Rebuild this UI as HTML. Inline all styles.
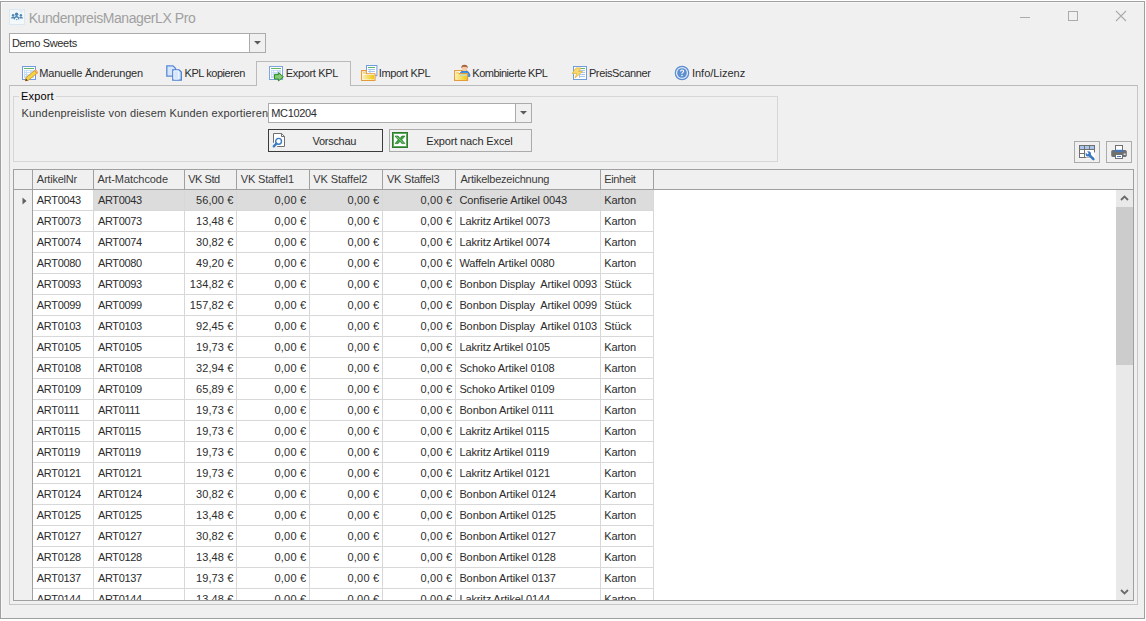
<!DOCTYPE html>
<html><head><meta charset="utf-8">
<style>
*{margin:0;padding:0;box-sizing:border-box}
html,body{width:1146px;height:621px;overflow:hidden;background:#fff}
body{position:relative;font-family:"Liberation Sans",sans-serif;font-size:11px;color:#2c2c2c;letter-spacing:-0.4px}
.a{position:absolute}
#win{position:absolute;left:0;top:1px;width:1145px;height:618px;border:1px solid #a0a0a0;background:#f0f0f0;box-shadow:inset 1px 1px 0 #f8f8f8}
.t{position:absolute;white-space:pre;line-height:20px;height:20px}
/* grid */
.hc{position:absolute;top:170px;height:19px;line-height:19px;padding-left:4px;color:#3a3a3a;white-space:pre;background:#f0f0f0}
.hl{position:absolute;top:170px;width:1px;height:19px;background:#a0a0a0}
.c{position:absolute;height:20px;line-height:20px;padding:0 3px 0 4px;white-space:pre;overflow:hidden;background:#fff}
.c.r{text-align:right}
.c.sel{background:#dcdcdc}
.rl{position:absolute;left:33px;width:621px;height:1px;background:#d8d8d8}
.vl{position:absolute;top:190px;width:1px;height:410px;background:#d8d8d8}
</style></head><body>
<div id="win"></div>

<!-- title bar -->


<!-- window buttons -->
<div class="a" style="left:1020px;top:17px;width:10px;height:1px;background:#ababab"></div>
<div class="a" style="left:1068px;top:11px;width:10px;height:10px;border:1px solid #ababab"></div>
<svg class="a" style="left:1115px;top:10px" width="12" height="12" viewBox="0 0 12 12"><path d="M1 1L11 11M11 1L1 11" stroke="#ababab" stroke-width="1.1" fill="none"/></svg>

<!-- customer combo -->
<div class="a" style="left:9px;top:33px;width:257px;height:20px;border:1px solid #ababab;background:#fff"></div>
<div class="a" style="left:249px;top:34px;width:16px;height:18px;border-left:1px solid #ababab;background:#f0f0f0"></div>
<svg class="a" style="left:253px;top:40px" width="9" height="6" viewBox="0 0 9 6"><path d="M1 1H8L4.5 4.5Z" fill="#5a5a5a"/></svg>

<!-- tab page -->
<div class="a" style="left:9px;top:85px;width:1129px;height:520px;border:1px solid #c6c6c6;border-top-color:#bababa"></div>
<!-- active tab -->
<div class="a" style="left:256px;top:61px;width:95px;height:25px;border:1px solid #bababa;border-bottom:none;background:#f0f0f0"></div>

<!-- tabs text -->

<!-- group box -->
<div class="a" style="left:13px;top:96px;width:765px;height:66px;border:1px solid #d6d6d6"></div>

<!-- MC combo -->
<div class="a" style="left:268px;top:103px;width:264px;height:20px;border:1px solid #ababab;background:#fff"></div>
<div class="a" style="left:515px;top:104px;width:16px;height:18px;border-left:1px solid #ababab;background:#f0f0f0"></div>
<svg class="a" style="left:519px;top:110px" width="9" height="6" viewBox="0 0 9 6"><path d="M1 1H8L4.5 4.5Z" fill="#5a5a5a"/></svg>

<!-- buttons -->
<div class="a" style="left:268px;top:129px;width:115px;height:23px;border:1px solid #3c3c3c;background:#f0f0f0"></div>
<div class="a" style="left:389px;top:129px;width:143px;height:23px;border:1px solid #ababab;background:#f0f0f0"></div>

<!-- right buttons -->
<div class="a" style="left:1074px;top:141px;width:26px;height:22px;border:1px solid #ababab"></div>
<div class="a" style="left:1106px;top:141px;width:26px;height:22px;border:1px solid #ababab"></div>

<!-- grid -->
<div class="a" style="left:13px;top:169px;width:1121px;height:432px;border:1px solid #a0a0a0;background:#fff"></div>
<div class="a" style="left:14px;top:170px;width:1119px;height:19px;background:#f0f0f0"></div>
<div class="a" style="left:14px;top:189px;width:1119px;height:1px;background:#a0a0a0"></div>
<div class="a" style="left:14px;top:190px;width:18px;height:410px;background:#f0f0f0"></div>
<div class="a" style="left:32px;top:190px;width:1px;height:410px;background:#a0a0a0"></div>
<div class="a" style="left:14px;top:170px;width:1119px;height:430px;overflow:hidden;">
<div class="a" style="left:-14px;top:-170px;width:1146px;height:621px">
<div class="hc" id="h0" style="left:33px;width:60px;padding-left:3.80px;letter-spacing:-0.225px"><span>ArtikelNr</span></div>
<div class="hc" id="h1" style="left:94px;width:90px;padding-left:3.40px;letter-spacing:-0.074px"><span>Art-Matchcode</span></div>
<div class="hc" id="h2" style="left:185px;width:51px;padding-left:3.20px;letter-spacing:-0.450px"><span>VK Std</span></div>
<div class="hc" id="h3" style="left:237px;width:72px;padding-left:3.80px;letter-spacing:-0.162px"><span>VK Staffel1</span></div>
<div class="hc" id="h4" style="left:310px;width:72px;padding-left:3.20px;letter-spacing:-0.054px"><span>VK Staffel2</span></div>
<div class="hc" id="h5" style="left:383px;width:72px;padding-left:4.00px;letter-spacing:-0.234px"><span>VK Staffel3</span></div>
<div class="hc" id="h6" style="left:456px;width:144px;padding-left:4.40px;letter-spacing:-0.232px"><span>Artikelbezeichnung</span></div>
<div class="hc" id="h7" style="left:601px;width:52px;padding-left:3.20px;letter-spacing:-0.330px"><span>Einheit</span></div>
<div class="hl" style="left:32px"></div>
<div class="hl" style="left:93px"></div>
<div class="hl" style="left:184px"></div>
<div class="hl" style="left:236px"></div>
<div class="hl" style="left:309px"></div>
<div class="hl" style="left:382px"></div>
<div class="hl" style="left:455px"></div>
<div class="hl" style="left:600px"></div>
<div class="hl" style="left:653px"></div>
<div class="c" id="r0c0" style="left:33px;top:190px;width:60px;padding:0 0 0 3.80px;letter-spacing:-0.310px"><span>ART0043</span></div>
<div class="c sel" id="r0c1" style="left:94px;top:190px;width:90px;padding:0 0 0 4.00px;letter-spacing:-0.370px"><span>ART0043</span></div>
<div class="c sel r" id="r0c2" style="left:185px;top:190px;width:51px;padding:0 2.60px 0 0;letter-spacing:0.110px"><span>56,00 €</span></div>
<div class="c sel r" id="r0c3" style="left:237px;top:190px;width:72px;padding:0 2.70px 0 0;letter-spacing:0.200px"><span>0,00 €</span></div>
<div class="c sel r" id="r0c4" style="left:310px;top:190px;width:72px;padding:0 2.70px 0 0;letter-spacing:0.200px"><span>0,00 €</span></div>
<div class="c sel r" id="r0c5" style="left:383px;top:190px;width:72px;padding:0 2.70px 0 0;letter-spacing:0.200px"><span>0,00 €</span></div>
<div class="c sel" id="r0c6" style="left:456px;top:190px;width:144px;padding:0 0 0 3.40px;letter-spacing:-0.110px"><span>Confiserie Artikel 0043</span></div>
<div class="c sel" id="r0c7" style="left:601px;top:190px;width:52px;padding:0 0 0 3.20px;letter-spacing:-0.076px"><span>Karton</span></div>
<div class="rl" style="top:210px"></div>
<div class="c" style="left:33px;top:211px;width:60px;padding:0 0 0 3.80px;letter-spacing:-0.310px"><span>ART0073</span></div>
<div class="c" style="left:94px;top:211px;width:90px;padding:0 0 0 4.00px;letter-spacing:-0.370px"><span>ART0073</span></div>
<div class="c r" style="left:185px;top:211px;width:51px;padding:0 2.60px 0 0;letter-spacing:0.110px"><span>13,48 €</span></div>
<div class="c r" style="left:237px;top:211px;width:72px;padding:0 2.70px 0 0;letter-spacing:0.200px"><span>0,00 €</span></div>
<div class="c r" style="left:310px;top:211px;width:72px;padding:0 2.70px 0 0;letter-spacing:0.200px"><span>0,00 €</span></div>
<div class="c r" style="left:383px;top:211px;width:72px;padding:0 2.70px 0 0;letter-spacing:0.200px"><span>0,00 €</span></div>
<div class="c" style="left:456px;top:211px;width:144px;padding:0 0 0 3.40px;letter-spacing:-0.110px"><span>Lakritz Artikel 0073</span></div>
<div class="c" style="left:601px;top:211px;width:52px;padding:0 0 0 3.20px;letter-spacing:-0.076px"><span>Karton</span></div>
<div class="rl" style="top:231px"></div>
<div class="c" style="left:33px;top:232px;width:60px;padding:0 0 0 3.80px;letter-spacing:-0.310px"><span>ART0074</span></div>
<div class="c" style="left:94px;top:232px;width:90px;padding:0 0 0 4.00px;letter-spacing:-0.370px"><span>ART0074</span></div>
<div class="c r" style="left:185px;top:232px;width:51px;padding:0 2.60px 0 0;letter-spacing:0.110px"><span>30,82 €</span></div>
<div class="c r" style="left:237px;top:232px;width:72px;padding:0 2.70px 0 0;letter-spacing:0.200px"><span>0,00 €</span></div>
<div class="c r" style="left:310px;top:232px;width:72px;padding:0 2.70px 0 0;letter-spacing:0.200px"><span>0,00 €</span></div>
<div class="c r" style="left:383px;top:232px;width:72px;padding:0 2.70px 0 0;letter-spacing:0.200px"><span>0,00 €</span></div>
<div class="c" style="left:456px;top:232px;width:144px;padding:0 0 0 3.40px;letter-spacing:-0.110px"><span>Lakritz Artikel 0074</span></div>
<div class="c" style="left:601px;top:232px;width:52px;padding:0 0 0 3.20px;letter-spacing:-0.076px"><span>Karton</span></div>
<div class="rl" style="top:252px"></div>
<div class="c" style="left:33px;top:253px;width:60px;padding:0 0 0 3.80px;letter-spacing:-0.310px"><span>ART0080</span></div>
<div class="c" style="left:94px;top:253px;width:90px;padding:0 0 0 4.00px;letter-spacing:-0.370px"><span>ART0080</span></div>
<div class="c r" style="left:185px;top:253px;width:51px;padding:0 2.60px 0 0;letter-spacing:0.110px"><span>49,20 €</span></div>
<div class="c r" style="left:237px;top:253px;width:72px;padding:0 2.70px 0 0;letter-spacing:0.200px"><span>0,00 €</span></div>
<div class="c r" style="left:310px;top:253px;width:72px;padding:0 2.70px 0 0;letter-spacing:0.200px"><span>0,00 €</span></div>
<div class="c r" style="left:383px;top:253px;width:72px;padding:0 2.70px 0 0;letter-spacing:0.200px"><span>0,00 €</span></div>
<div class="c" style="left:456px;top:253px;width:144px;padding:0 0 0 3.40px;letter-spacing:-0.110px"><span>Waffeln Artikel 0080</span></div>
<div class="c" style="left:601px;top:253px;width:52px;padding:0 0 0 3.20px;letter-spacing:-0.076px"><span>Karton</span></div>
<div class="rl" style="top:273px"></div>
<div class="c" id="r4c0" style="left:33px;top:274px;width:60px;padding:0 0 0 3.80px;letter-spacing:-0.310px"><span>ART0093</span></div>
<div class="c" id="r4c1" style="left:94px;top:274px;width:90px;padding:0 0 0 4.00px;letter-spacing:-0.370px"><span>ART0093</span></div>
<div class="c r" id="r4c2" style="left:185px;top:274px;width:51px;padding:0 2.60px 0 0;letter-spacing:0.110px"><span>134,82 €</span></div>
<div class="c r" id="r4c3" style="left:237px;top:274px;width:72px;padding:0 2.70px 0 0;letter-spacing:0.200px"><span>0,00 €</span></div>
<div class="c r" id="r4c4" style="left:310px;top:274px;width:72px;padding:0 2.70px 0 0;letter-spacing:0.200px"><span>0,00 €</span></div>
<div class="c r" id="r4c5" style="left:383px;top:274px;width:72px;padding:0 2.70px 0 0;letter-spacing:0.200px"><span>0,00 €</span></div>
<div class="c" id="r4c6" style="left:456px;top:274px;width:144px;padding:0 0 0 3.40px;letter-spacing:-0.110px"><span>Bonbon Display&nbsp; Artikel 0093</span></div>
<div class="c" id="r4c7" style="left:601px;top:274px;width:52px;padding:0 0 0 3.20px;letter-spacing:-0.076px"><span>Stück</span></div>
<div class="rl" style="top:294px"></div>
<div class="c" style="left:33px;top:295px;width:60px;padding:0 0 0 3.80px;letter-spacing:-0.310px"><span>ART0099</span></div>
<div class="c" style="left:94px;top:295px;width:90px;padding:0 0 0 4.00px;letter-spacing:-0.370px"><span>ART0099</span></div>
<div class="c r" style="left:185px;top:295px;width:51px;padding:0 2.60px 0 0;letter-spacing:0.110px"><span>157,82 €</span></div>
<div class="c r" style="left:237px;top:295px;width:72px;padding:0 2.70px 0 0;letter-spacing:0.200px"><span>0,00 €</span></div>
<div class="c r" style="left:310px;top:295px;width:72px;padding:0 2.70px 0 0;letter-spacing:0.200px"><span>0,00 €</span></div>
<div class="c r" style="left:383px;top:295px;width:72px;padding:0 2.70px 0 0;letter-spacing:0.200px"><span>0,00 €</span></div>
<div class="c" style="left:456px;top:295px;width:144px;padding:0 0 0 3.40px;letter-spacing:-0.110px"><span>Bonbon Display&nbsp; Artikel 0099</span></div>
<div class="c" style="left:601px;top:295px;width:52px;padding:0 0 0 3.20px;letter-spacing:-0.076px"><span>Stück</span></div>
<div class="rl" style="top:315px"></div>
<div class="c" style="left:33px;top:316px;width:60px;padding:0 0 0 3.80px;letter-spacing:-0.310px"><span>ART0103</span></div>
<div class="c" style="left:94px;top:316px;width:90px;padding:0 0 0 4.00px;letter-spacing:-0.370px"><span>ART0103</span></div>
<div class="c r" style="left:185px;top:316px;width:51px;padding:0 2.60px 0 0;letter-spacing:0.110px"><span>92,45 €</span></div>
<div class="c r" style="left:237px;top:316px;width:72px;padding:0 2.70px 0 0;letter-spacing:0.200px"><span>0,00 €</span></div>
<div class="c r" style="left:310px;top:316px;width:72px;padding:0 2.70px 0 0;letter-spacing:0.200px"><span>0,00 €</span></div>
<div class="c r" style="left:383px;top:316px;width:72px;padding:0 2.70px 0 0;letter-spacing:0.200px"><span>0,00 €</span></div>
<div class="c" style="left:456px;top:316px;width:144px;padding:0 0 0 3.40px;letter-spacing:-0.110px"><span>Bonbon Display&nbsp; Artikel 0103</span></div>
<div class="c" style="left:601px;top:316px;width:52px;padding:0 0 0 3.20px;letter-spacing:-0.076px"><span>Stück</span></div>
<div class="rl" style="top:336px"></div>
<div class="c" style="left:33px;top:337px;width:60px;padding:0 0 0 3.80px;letter-spacing:-0.310px"><span>ART0105</span></div>
<div class="c" style="left:94px;top:337px;width:90px;padding:0 0 0 4.00px;letter-spacing:-0.370px"><span>ART0105</span></div>
<div class="c r" style="left:185px;top:337px;width:51px;padding:0 2.60px 0 0;letter-spacing:0.110px"><span>19,73 €</span></div>
<div class="c r" style="left:237px;top:337px;width:72px;padding:0 2.70px 0 0;letter-spacing:0.200px"><span>0,00 €</span></div>
<div class="c r" style="left:310px;top:337px;width:72px;padding:0 2.70px 0 0;letter-spacing:0.200px"><span>0,00 €</span></div>
<div class="c r" style="left:383px;top:337px;width:72px;padding:0 2.70px 0 0;letter-spacing:0.200px"><span>0,00 €</span></div>
<div class="c" style="left:456px;top:337px;width:144px;padding:0 0 0 3.40px;letter-spacing:-0.110px"><span>Lakritz Artikel 0105</span></div>
<div class="c" style="left:601px;top:337px;width:52px;padding:0 0 0 3.20px;letter-spacing:-0.076px"><span>Karton</span></div>
<div class="rl" style="top:357px"></div>
<div class="c" style="left:33px;top:358px;width:60px;padding:0 0 0 3.80px;letter-spacing:-0.310px"><span>ART0108</span></div>
<div class="c" style="left:94px;top:358px;width:90px;padding:0 0 0 4.00px;letter-spacing:-0.370px"><span>ART0108</span></div>
<div class="c r" style="left:185px;top:358px;width:51px;padding:0 2.60px 0 0;letter-spacing:0.110px"><span>32,94 €</span></div>
<div class="c r" style="left:237px;top:358px;width:72px;padding:0 2.70px 0 0;letter-spacing:0.200px"><span>0,00 €</span></div>
<div class="c r" style="left:310px;top:358px;width:72px;padding:0 2.70px 0 0;letter-spacing:0.200px"><span>0,00 €</span></div>
<div class="c r" style="left:383px;top:358px;width:72px;padding:0 2.70px 0 0;letter-spacing:0.200px"><span>0,00 €</span></div>
<div class="c" style="left:456px;top:358px;width:144px;padding:0 0 0 3.40px;letter-spacing:-0.110px"><span>Schoko Artikel 0108</span></div>
<div class="c" style="left:601px;top:358px;width:52px;padding:0 0 0 3.20px;letter-spacing:-0.076px"><span>Karton</span></div>
<div class="rl" style="top:378px"></div>
<div class="c" style="left:33px;top:379px;width:60px;padding:0 0 0 3.80px;letter-spacing:-0.310px"><span>ART0109</span></div>
<div class="c" style="left:94px;top:379px;width:90px;padding:0 0 0 4.00px;letter-spacing:-0.370px"><span>ART0109</span></div>
<div class="c r" style="left:185px;top:379px;width:51px;padding:0 2.60px 0 0;letter-spacing:0.110px"><span>65,89 €</span></div>
<div class="c r" style="left:237px;top:379px;width:72px;padding:0 2.70px 0 0;letter-spacing:0.200px"><span>0,00 €</span></div>
<div class="c r" style="left:310px;top:379px;width:72px;padding:0 2.70px 0 0;letter-spacing:0.200px"><span>0,00 €</span></div>
<div class="c r" style="left:383px;top:379px;width:72px;padding:0 2.70px 0 0;letter-spacing:0.200px"><span>0,00 €</span></div>
<div class="c" style="left:456px;top:379px;width:144px;padding:0 0 0 3.40px;letter-spacing:-0.110px"><span>Schoko Artikel 0109</span></div>
<div class="c" style="left:601px;top:379px;width:52px;padding:0 0 0 3.20px;letter-spacing:-0.076px"><span>Karton</span></div>
<div class="rl" style="top:399px"></div>
<div class="c" style="left:33px;top:400px;width:60px;padding:0 0 0 3.80px;letter-spacing:-0.310px"><span>ART0111</span></div>
<div class="c" style="left:94px;top:400px;width:90px;padding:0 0 0 4.00px;letter-spacing:-0.370px"><span>ART0111</span></div>
<div class="c r" style="left:185px;top:400px;width:51px;padding:0 2.60px 0 0;letter-spacing:0.110px"><span>19,73 €</span></div>
<div class="c r" style="left:237px;top:400px;width:72px;padding:0 2.70px 0 0;letter-spacing:0.200px"><span>0,00 €</span></div>
<div class="c r" style="left:310px;top:400px;width:72px;padding:0 2.70px 0 0;letter-spacing:0.200px"><span>0,00 €</span></div>
<div class="c r" style="left:383px;top:400px;width:72px;padding:0 2.70px 0 0;letter-spacing:0.200px"><span>0,00 €</span></div>
<div class="c" style="left:456px;top:400px;width:144px;padding:0 0 0 3.40px;letter-spacing:-0.110px"><span>Bonbon Artikel 0111</span></div>
<div class="c" style="left:601px;top:400px;width:52px;padding:0 0 0 3.20px;letter-spacing:-0.076px"><span>Karton</span></div>
<div class="rl" style="top:420px"></div>
<div class="c" style="left:33px;top:421px;width:60px;padding:0 0 0 3.80px;letter-spacing:-0.310px"><span>ART0115</span></div>
<div class="c" style="left:94px;top:421px;width:90px;padding:0 0 0 4.00px;letter-spacing:-0.370px"><span>ART0115</span></div>
<div class="c r" style="left:185px;top:421px;width:51px;padding:0 2.60px 0 0;letter-spacing:0.110px"><span>19,73 €</span></div>
<div class="c r" style="left:237px;top:421px;width:72px;padding:0 2.70px 0 0;letter-spacing:0.200px"><span>0,00 €</span></div>
<div class="c r" style="left:310px;top:421px;width:72px;padding:0 2.70px 0 0;letter-spacing:0.200px"><span>0,00 €</span></div>
<div class="c r" style="left:383px;top:421px;width:72px;padding:0 2.70px 0 0;letter-spacing:0.200px"><span>0,00 €</span></div>
<div class="c" style="left:456px;top:421px;width:144px;padding:0 0 0 3.40px;letter-spacing:-0.110px"><span>Lakritz Artikel 0115</span></div>
<div class="c" style="left:601px;top:421px;width:52px;padding:0 0 0 3.20px;letter-spacing:-0.076px"><span>Karton</span></div>
<div class="rl" style="top:441px"></div>
<div class="c" style="left:33px;top:442px;width:60px;padding:0 0 0 3.80px;letter-spacing:-0.310px"><span>ART0119</span></div>
<div class="c" style="left:94px;top:442px;width:90px;padding:0 0 0 4.00px;letter-spacing:-0.370px"><span>ART0119</span></div>
<div class="c r" style="left:185px;top:442px;width:51px;padding:0 2.60px 0 0;letter-spacing:0.110px"><span>19,73 €</span></div>
<div class="c r" style="left:237px;top:442px;width:72px;padding:0 2.70px 0 0;letter-spacing:0.200px"><span>0,00 €</span></div>
<div class="c r" style="left:310px;top:442px;width:72px;padding:0 2.70px 0 0;letter-spacing:0.200px"><span>0,00 €</span></div>
<div class="c r" style="left:383px;top:442px;width:72px;padding:0 2.70px 0 0;letter-spacing:0.200px"><span>0,00 €</span></div>
<div class="c" style="left:456px;top:442px;width:144px;padding:0 0 0 3.40px;letter-spacing:-0.110px"><span>Lakritz Artikel 0119</span></div>
<div class="c" style="left:601px;top:442px;width:52px;padding:0 0 0 3.20px;letter-spacing:-0.076px"><span>Karton</span></div>
<div class="rl" style="top:462px"></div>
<div class="c" style="left:33px;top:463px;width:60px;padding:0 0 0 3.80px;letter-spacing:-0.310px"><span>ART0121</span></div>
<div class="c" style="left:94px;top:463px;width:90px;padding:0 0 0 4.00px;letter-spacing:-0.370px"><span>ART0121</span></div>
<div class="c r" style="left:185px;top:463px;width:51px;padding:0 2.60px 0 0;letter-spacing:0.110px"><span>19,73 €</span></div>
<div class="c r" style="left:237px;top:463px;width:72px;padding:0 2.70px 0 0;letter-spacing:0.200px"><span>0,00 €</span></div>
<div class="c r" style="left:310px;top:463px;width:72px;padding:0 2.70px 0 0;letter-spacing:0.200px"><span>0,00 €</span></div>
<div class="c r" style="left:383px;top:463px;width:72px;padding:0 2.70px 0 0;letter-spacing:0.200px"><span>0,00 €</span></div>
<div class="c" style="left:456px;top:463px;width:144px;padding:0 0 0 3.40px;letter-spacing:-0.110px"><span>Lakritz Artikel 0121</span></div>
<div class="c" style="left:601px;top:463px;width:52px;padding:0 0 0 3.20px;letter-spacing:-0.076px"><span>Karton</span></div>
<div class="rl" style="top:483px"></div>
<div class="c" style="left:33px;top:484px;width:60px;padding:0 0 0 3.80px;letter-spacing:-0.310px"><span>ART0124</span></div>
<div class="c" style="left:94px;top:484px;width:90px;padding:0 0 0 4.00px;letter-spacing:-0.370px"><span>ART0124</span></div>
<div class="c r" style="left:185px;top:484px;width:51px;padding:0 2.60px 0 0;letter-spacing:0.110px"><span>30,82 €</span></div>
<div class="c r" style="left:237px;top:484px;width:72px;padding:0 2.70px 0 0;letter-spacing:0.200px"><span>0,00 €</span></div>
<div class="c r" style="left:310px;top:484px;width:72px;padding:0 2.70px 0 0;letter-spacing:0.200px"><span>0,00 €</span></div>
<div class="c r" style="left:383px;top:484px;width:72px;padding:0 2.70px 0 0;letter-spacing:0.200px"><span>0,00 €</span></div>
<div class="c" style="left:456px;top:484px;width:144px;padding:0 0 0 3.40px;letter-spacing:-0.110px"><span>Bonbon Artikel 0124</span></div>
<div class="c" style="left:601px;top:484px;width:52px;padding:0 0 0 3.20px;letter-spacing:-0.076px"><span>Karton</span></div>
<div class="rl" style="top:504px"></div>
<div class="c" style="left:33px;top:505px;width:60px;padding:0 0 0 3.80px;letter-spacing:-0.310px"><span>ART0125</span></div>
<div class="c" style="left:94px;top:505px;width:90px;padding:0 0 0 4.00px;letter-spacing:-0.370px"><span>ART0125</span></div>
<div class="c r" style="left:185px;top:505px;width:51px;padding:0 2.60px 0 0;letter-spacing:0.110px"><span>13,48 €</span></div>
<div class="c r" style="left:237px;top:505px;width:72px;padding:0 2.70px 0 0;letter-spacing:0.200px"><span>0,00 €</span></div>
<div class="c r" style="left:310px;top:505px;width:72px;padding:0 2.70px 0 0;letter-spacing:0.200px"><span>0,00 €</span></div>
<div class="c r" style="left:383px;top:505px;width:72px;padding:0 2.70px 0 0;letter-spacing:0.200px"><span>0,00 €</span></div>
<div class="c" style="left:456px;top:505px;width:144px;padding:0 0 0 3.40px;letter-spacing:-0.110px"><span>Bonbon Artikel 0125</span></div>
<div class="c" style="left:601px;top:505px;width:52px;padding:0 0 0 3.20px;letter-spacing:-0.076px"><span>Karton</span></div>
<div class="rl" style="top:525px"></div>
<div class="c" style="left:33px;top:526px;width:60px;padding:0 0 0 3.80px;letter-spacing:-0.310px"><span>ART0127</span></div>
<div class="c" style="left:94px;top:526px;width:90px;padding:0 0 0 4.00px;letter-spacing:-0.370px"><span>ART0127</span></div>
<div class="c r" style="left:185px;top:526px;width:51px;padding:0 2.60px 0 0;letter-spacing:0.110px"><span>30,82 €</span></div>
<div class="c r" style="left:237px;top:526px;width:72px;padding:0 2.70px 0 0;letter-spacing:0.200px"><span>0,00 €</span></div>
<div class="c r" style="left:310px;top:526px;width:72px;padding:0 2.70px 0 0;letter-spacing:0.200px"><span>0,00 €</span></div>
<div class="c r" style="left:383px;top:526px;width:72px;padding:0 2.70px 0 0;letter-spacing:0.200px"><span>0,00 €</span></div>
<div class="c" style="left:456px;top:526px;width:144px;padding:0 0 0 3.40px;letter-spacing:-0.110px"><span>Bonbon Artikel 0127</span></div>
<div class="c" style="left:601px;top:526px;width:52px;padding:0 0 0 3.20px;letter-spacing:-0.076px"><span>Karton</span></div>
<div class="rl" style="top:546px"></div>
<div class="c" style="left:33px;top:547px;width:60px;padding:0 0 0 3.80px;letter-spacing:-0.310px"><span>ART0128</span></div>
<div class="c" style="left:94px;top:547px;width:90px;padding:0 0 0 4.00px;letter-spacing:-0.370px"><span>ART0128</span></div>
<div class="c r" style="left:185px;top:547px;width:51px;padding:0 2.60px 0 0;letter-spacing:0.110px"><span>13,48 €</span></div>
<div class="c r" style="left:237px;top:547px;width:72px;padding:0 2.70px 0 0;letter-spacing:0.200px"><span>0,00 €</span></div>
<div class="c r" style="left:310px;top:547px;width:72px;padding:0 2.70px 0 0;letter-spacing:0.200px"><span>0,00 €</span></div>
<div class="c r" style="left:383px;top:547px;width:72px;padding:0 2.70px 0 0;letter-spacing:0.200px"><span>0,00 €</span></div>
<div class="c" style="left:456px;top:547px;width:144px;padding:0 0 0 3.40px;letter-spacing:-0.110px"><span>Bonbon Artikel 0128</span></div>
<div class="c" style="left:601px;top:547px;width:52px;padding:0 0 0 3.20px;letter-spacing:-0.076px"><span>Karton</span></div>
<div class="rl" style="top:567px"></div>
<div class="c" style="left:33px;top:568px;width:60px;padding:0 0 0 3.80px;letter-spacing:-0.310px"><span>ART0137</span></div>
<div class="c" style="left:94px;top:568px;width:90px;padding:0 0 0 4.00px;letter-spacing:-0.370px"><span>ART0137</span></div>
<div class="c r" style="left:185px;top:568px;width:51px;padding:0 2.60px 0 0;letter-spacing:0.110px"><span>19,73 €</span></div>
<div class="c r" style="left:237px;top:568px;width:72px;padding:0 2.70px 0 0;letter-spacing:0.200px"><span>0,00 €</span></div>
<div class="c r" style="left:310px;top:568px;width:72px;padding:0 2.70px 0 0;letter-spacing:0.200px"><span>0,00 €</span></div>
<div class="c r" style="left:383px;top:568px;width:72px;padding:0 2.70px 0 0;letter-spacing:0.200px"><span>0,00 €</span></div>
<div class="c" style="left:456px;top:568px;width:144px;padding:0 0 0 3.40px;letter-spacing:-0.110px"><span>Bonbon Artikel 0137</span></div>
<div class="c" style="left:601px;top:568px;width:52px;padding:0 0 0 3.20px;letter-spacing:-0.076px"><span>Karton</span></div>
<div class="rl" style="top:588px"></div>
<div class="c" style="left:33px;top:589px;width:60px;padding:0 0 0 3.80px;letter-spacing:-0.310px"><span>ART0144</span></div>
<div class="c" style="left:94px;top:589px;width:90px;padding:0 0 0 4.00px;letter-spacing:-0.370px"><span>ART0144</span></div>
<div class="c r" style="left:185px;top:589px;width:51px;padding:0 2.60px 0 0;letter-spacing:0.110px"><span>13,48 €</span></div>
<div class="c r" style="left:237px;top:589px;width:72px;padding:0 2.70px 0 0;letter-spacing:0.200px"><span>0,00 €</span></div>
<div class="c r" style="left:310px;top:589px;width:72px;padding:0 2.70px 0 0;letter-spacing:0.200px"><span>0,00 €</span></div>
<div class="c r" style="left:383px;top:589px;width:72px;padding:0 2.70px 0 0;letter-spacing:0.200px"><span>0,00 €</span></div>
<div class="c" style="left:456px;top:589px;width:144px;padding:0 0 0 3.40px;letter-spacing:-0.110px"><span>Lakritz Artikel 0144</span></div>
<div class="c" style="left:601px;top:589px;width:52px;padding:0 0 0 3.20px;letter-spacing:-0.076px"><span>Karton</span></div>
<div class="rl" style="top:609px"></div>
<div class="vl" style="left:93px"></div>
<div class="vl" style="left:184px"></div>
<div class="vl" style="left:236px"></div>
<div class="vl" style="left:309px"></div>
<div class="vl" style="left:382px"></div>
<div class="vl" style="left:455px"></div>
<div class="vl" style="left:600px"></div>
<div class="vl" style="left:653px"></div>
</div></div>
<svg class="a" style="left:22px;top:197px" width="5" height="8" viewBox="0 0 5 8"><path d="M0.5 0.5L4.5 4L0.5 7.5Z" fill="#606060"/></svg>

<!-- scrollbar -->
<div class="a" style="left:1116px;top:190px;width:17px;height:410px;background:#e9e9e9"></div>
<div class="a" style="left:1116px;top:207px;width:17px;height:158px;background:#cccccc"></div>
<svg class="a" style="left:1120px;top:194px" width="9" height="8" viewBox="0 0 9 8"><path d="M1 6L4.5 2.5L8 6" stroke="#6a6a6a" stroke-width="1.8" fill="none"/></svg>
<svg class="a" style="left:1120px;top:588px" width="9" height="8" viewBox="0 0 9 8"><path d="M1 2L4.5 5.5L8 2" stroke="#6a6a6a" stroke-width="1.8" fill="none"/></svg>

<div class="t" id="title" style="left:28.70px;top:8px;letter-spacing:-0.417px;font-size:14px;color:#a0a0a0">KundenpreisManagerLX Pro</div>
<div class="t" id="demo" style="left:11.95px;top:33px;letter-spacing:-0.328px;">Demo Sweets</div>
<div class="t" id="tab1" style="left:39.30px;top:63px;letter-spacing:-0.215px;">Manuelle Änderungen</div>
<div class="t" id="tab2" style="left:184.60px;top:63px;letter-spacing:-0.450px;">KPL kopieren</div>
<div class="t" id="tab3" style="left:285.85px;top:63px;letter-spacing:-0.345px;">Export KPL</div>
<div class="t" id="tab4" style="left:378.70px;top:63px;letter-spacing:-0.350px;">Import KPL</div>
<div class="t" id="tab5" style="left:472.30px;top:63px;letter-spacing:-0.496px;">Kombinierte KPL</div>
<div class="t" id="tab6" style="left:588.90px;top:63px;letter-spacing:-0.375px;">PreisScanner</div>
<div class="t" id="tab7" style="left:691.90px;top:63px;letter-spacing:0.005px;">Info/Lizenz</div>
<div class="t" id="grp" style="left:21.10px;top:86px;letter-spacing:0.158px;background:#f0f0f0;padding:0 2px;margin-left:-2px;color:#000">Export</div>
<div class="t" id="lbl" style="left:21.60px;top:103px;letter-spacing:0.150px;color:#3a3a3a">Kundenpreisliste von diesem Kunden exportieren</div>
<div class="t" id="mc" style="left:271.30px;top:103px;letter-spacing:-0.355px;">MC10204</div>
<div class="t" id="vor" style="left:312.60px;top:131px;letter-spacing:-0.299px;">Vorschau</div>
<div class="t" id="exc" style="left:426.20px;top:131px;letter-spacing:-0.133px;">Export nach Excel</div>
<!-- title icon -->
<svg class="a" style="left:9px;top:9px" width="16" height="16" viewBox="0 0 16 16">
 <rect x="0.5" y="0.5" width="15" height="15" fill="#f3f8fb" stroke="#dce8f1"/>
 <path d="M9 0.5 L12.5 5 L15.5 0.5Z" fill="#e2edf5"/>
 <g fill="#4a86b8">
  <circle cx="7.6" cy="5.3" r="1.7"/>
  <circle cx="4.1" cy="6.3" r="1.2"/>
  <circle cx="11.9" cy="6.3" r="1.2"/>
  <path d="M4.8 10.6 Q4.8 7 7.6 7 Q10.4 7 10.4 10.6 L9.4 10.6 Q9.2 8.6 7.6 8.6 Q6 8.6 5.8 10.6Z"/>
  <path d="M2 9.6 Q2.2 7.4 4.1 7.4 Q5.6 7.4 5.9 8.6 L4.6 9.6Z"/>
  <path d="M14 9.6 Q13.8 7.4 11.9 7.4 Q10.4 7.4 10.1 8.6 L11.4 9.6Z"/>
  <circle cx="7.8" cy="10.6" r="0.7"/>
 </g>
</svg>

<!-- tab: Manuelle Aenderungen -->
<svg class="a" style="left:21px;top:65px" width="17" height="17" viewBox="0 0 17 17">
 <rect x="1.5" y="1.5" width="13" height="13" fill="#fff" stroke="#6d9de0"/>
 <rect x="3" y="3" width="10" height="1" fill="#62b562"/>
 <rect x="3" y="5" width="10" height="8" fill="#c9dcf6"/>
 <g fill="#fff"><rect x="4" y="6" width="1" height="1"/><rect x="4" y="8" width="1" height="1"/><rect x="4" y="10" width="1" height="1"/>
 <rect x="6" y="6" width="3" height="1"/><rect x="6" y="8" width="3" height="1"/></g>
 <path d="M4.4 15.8 L5.1 12.6 L13.6 5.6 L15.9 8.3 L7.5 15.2Z" fill="#f2d640" stroke="#d98a2c" stroke-width="0.8"/>
 <path d="M13.6 5.6 L14.6 4.8 L16.9 7.5 L15.9 8.3Z" fill="#f7d7b0" stroke="#d98a2c" stroke-width="0.8"/>
 <path d="M4.3 16 L4.9 13.4 L6.9 15.5Z" fill="#5a3210"/>
</svg>

<!-- tab: KPL kopieren -->
<svg class="a" style="left:166px;top:65px" width="16" height="16" viewBox="0 0 16 16">
 <path d="M0.8 0.8 H7 L9.5 3.3 V11.2 H0.8Z" fill="#d6e6fa" stroke="#5a8ad6" stroke-width="1.3"/>
 <path d="M6.8 4.8 H13 L15.3 7.1 V15.2 H6.8Z" fill="#d6e6fa" stroke="#4f80d0" stroke-width="1.3"/>
 <path d="M7.8 5.8 H12.5 V14.2 H7.8Z" fill="none" stroke="#f4f9ff" stroke-width="0.8"/>
</svg>

<!-- tab: Export KPL -->
<svg class="a" style="left:268px;top:65px" width="17" height="17" viewBox="0 0 17 17">
 <rect x="1.5" y="1.5" width="13" height="13" fill="#fff" stroke="#7aa5e2"/>
 <rect x="3" y="3" width="10" height="1" fill="#62b562"/>
 <rect x="3" y="5" width="10" height="8" fill="#c9dcf6"/>
 <g fill="#fff"><rect x="4" y="6" width="1" height="1"/><rect x="4" y="8" width="1" height="1"/><rect x="4" y="10" width="1" height="1"/>
 <rect x="6" y="6" width="3" height="1"/></g>
 <path d="M6.5 9.6 H10.4 V7.6 L15.4 11.8 L10.4 16 V14 H6.5Z" fill="#86c978" stroke="#2f8d22" stroke-width="1"/>
</svg>

<!-- tab: Import KPL -->
<svg class="a" style="left:361px;top:65px" width="17" height="17" viewBox="0 0 17 17">
 <defs><linearGradient id="yg" x1="0" x2="1" y1="0" y2="0"><stop offset="0" stop-color="#fbeeb0"/><stop offset="1" stop-color="#f0c810"/></linearGradient></defs>
 <rect x="5.5" y="0.5" width="10.4" height="10.2" fill="#fff" stroke="#6d9de0"/>
 <rect x="7" y="2" width="7" height="1" fill="#62b562"/>
 <rect x="7" y="4" width="7" height="1" fill="#a9c6ef"/><rect x="7" y="6" width="7" height="1" fill="#a9c6ef"/><rect x="8.5" y="4" width="1" height="4" fill="#a9c6ef"/>
 <path d="M0.6 5.6 H5.2 L5.2 8.8 H14 V15.5 H0.6Z" fill="#fffdf4" stroke="#e69b3a" stroke-width="1.1"/>
 <rect x="2" y="10" width="11" height="4.5" fill="url(#yg)"/>
 <rect x="2" y="7" width="2.6" height="2" fill="#f6dc80"/>
</svg>

<!-- tab: Kombinierte KPL -->
<svg class="a" style="left:451px;top:62px" width="20" height="20" viewBox="0 0 20 20">
 <defs><linearGradient id="yg2" x1="0" x2="1" y1="0" y2="0"><stop offset="0" stop-color="#fbeeb0"/><stop offset="1" stop-color="#f0c810"/></linearGradient></defs>
 <rect x="3.6" y="8.6" width="12" height="9.8" fill="#fffdf4" stroke="#e69b3a" stroke-width="1.1"/>
 <rect x="5" y="10" width="3" height="2" fill="#f6dc80"/>
 <path d="M8.4 12.6 Q9.2 8.8 13.6 8.8 Q18.2 8.8 18.9 12.8 L18.9 14.4 H16 V12 H8.4Z" fill="#3d95e6" stroke="#2a62b8" stroke-width="0.6"/>
 <circle cx="13.5" cy="6.4" r="2.7" fill="#f5cca6"/>
 <path d="M10.3 6.6 Q9.8 2.9 13.5 2.8 Q17.2 2.9 16.7 6.6 Q16.2 4.6 13.5 4.9 Q10.8 4.6 10.3 6.6Z" fill="#a5643a"/>
 <path d="M7.8 11.6 H16.6 V18.4 H3.6 V15" fill="none" stroke="#e69b3a" stroke-width="1.1"/>
 <rect x="4.3" y="12.2" width="11.7" height="5.6" fill="url(#yg2)"/>
 <rect x="9" y="12.2" width="7" height="2" fill="#c4dcae"/>
</svg>

<!-- tab: PreisScanner -->
<svg class="a" style="left:571px;top:65px" width="17" height="17" viewBox="0 0 17 17">
 <rect x="2.5" y="1.5" width="13" height="13" fill="#fff" stroke="#6d9de0"/>
 <rect x="9" y="3" width="5" height="1" fill="#62b562"/>
 <g fill="#a9c6ef"><rect x="9" y="5" width="5" height="1"/><rect x="9" y="7" width="5" height="1"/><rect x="9" y="9" width="5" height="1"/><rect x="9" y="11" width="5" height="1"/>
 <rect x="8" y="5" width="1" height="8"/></g>
 <path d="M5 3 H10 L7.5 6.5 H11.5 L4 13 L5.8 8.4 H1.2Z" fill="#f5dc70" stroke="#e6b040" stroke-width="0.8"/>
</svg>

<!-- tab: Info/Lizenz -->
<svg class="a" style="left:674px;top:65px" width="16" height="16" viewBox="0 0 16 16">
 <circle cx="8" cy="8" r="6.7" fill="#dfe9f7" stroke="#5b8cd0" stroke-width="1.2"/>
 <circle cx="8" cy="8" r="4.8" fill="#5e8fcf"/>
 <path d="M6 6.6 Q6 4.4 8.1 4.4 Q10.2 4.4 10.2 6.3 Q10.2 7.5 8.8 8 Q8.4 8.2 8.4 9 H7.4 Q7.4 7.7 8.3 7.2 Q9 6.8 9 6.3 Q9 5.4 8.1 5.4 Q7.2 5.4 7.2 6.6Z" fill="#fff"/>
 <rect x="7.3" y="9.8" width="1.3" height="1.3" fill="#fff"/>
</svg>

<!-- Vorschau icon -->
<svg class="a" style="left:272px;top:132px" width="16" height="16" viewBox="0 0 16 16">
 <path d="M1.5 10.8 V1.5 H9.6 L12.5 4.4 V14.5 H5.2" fill="#fff" stroke="#707070" stroke-width="1"/>
 <path d="M9.5 1.5 V4.5 H12.5" fill="none" stroke="#707070" stroke-width="1"/>
 <circle cx="6.6" cy="9.3" r="2.9" fill="#fff" stroke="#3d7cc4" stroke-width="1.4"/>
 <path d="M4.4 11.6 L1.8 14.3" stroke="#3d7cc4" stroke-width="2.4" stroke-linecap="round"/>
</svg>

<!-- Excel icon -->
<svg class="a" style="left:392px;top:132px" width="16" height="16" viewBox="0 0 16 16">
 <rect x="0.5" y="0.5" width="15" height="15" fill="#9fd39a" stroke="#2f7a2f"/>
 <rect x="1.5" y="1.5" width="13" height="13" fill="none" stroke="#5aa85a"/>
 <rect x="2" y="2" width="12" height="12" fill="#fff"/>
 <path d="M3 4 H6.2 L8 6.4 L9.8 4 H13 L9.8 7.8 L13 11.6 H9.8 L8 9.2 L6.2 11.6 H3 L6.2 7.8Z" fill="#3aa63e" stroke="#1d6a22" stroke-width="0.6"/>
 <path d="M4.5 4.6 L11.5 11" stroke="#8fd68f" stroke-width="0.8"/>
</svg>

<!-- table settings icon -->
<svg class="a" style="left:1078px;top:144px" width="18" height="17" viewBox="0 0 18 17">
 <rect x="1.5" y="1.5" width="15" height="12" fill="#fff" stroke="#707070"/>
 <rect x="2" y="2" width="14" height="3.5" fill="#a8c6ec"/>
 <path d="M1.5 5.5 H16.5 M1.5 9.5 H6.5 M6.5 1.5 V13.5 M11.5 1.5 V5.5" stroke="#707070" fill="none"/>
 <path d="M8 14 H16.5 V8.5" stroke="#fff" stroke-width="1.2" fill="none"/>
 <circle cx="10.3" cy="9.9" r="2.7" fill="#3a78c2"/>
 <path d="M7.6 7.2 L10.2 9.8" stroke="#fff" stroke-width="1.7"/>
 <path d="M11.2 10.8 L15.4 15.2" stroke="#3a78c2" stroke-width="2.5" stroke-linecap="round"/>
</svg>

<!-- print icon -->
<svg class="a" style="left:1110px;top:144px" width="18" height="17" viewBox="0 0 18 17">
 <rect x="5.5" y="1.5" width="7" height="6" fill="#fff" stroke="#707070"/>
 <rect x="5" y="5.8" width="8" height="2" fill="#3d78c0"/>
 <path d="M2.8 6 H5 V8 H13 V6 H15.2 Q16.8 6 16.8 7.6 V11.6 Q16.8 13 15.2 13 H2.8 Q1.2 13 1.2 11.6 V7.6 Q1.2 6 2.8 6Z" fill="#707070"/>
 <rect x="5.5" y="10.5" width="7" height="4" fill="#fff" stroke="#707070"/>
 <rect x="7" y="12" width="4" height="1" fill="#3d78c0"/>
 <rect x="13.6" y="9.6" width="2" height="1.2" fill="#fff"/>
</svg>

</body></html>
